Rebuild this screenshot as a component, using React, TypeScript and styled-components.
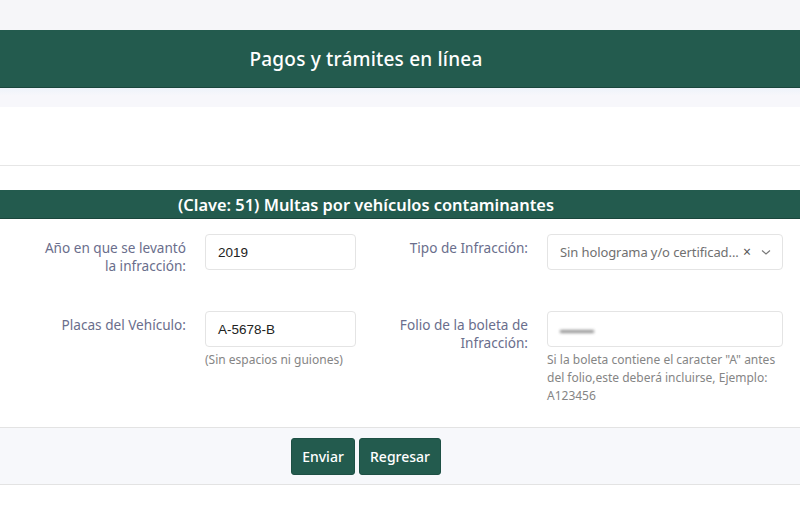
import React from 'react';
import styled, { createGlobalStyle } from 'styled-components';

const GlobalStyle = createGlobalStyle`
  html, body { margin: 0; padding: 0; background: #ffffff; }
  body { font-family: "Noto Sans", "Open Sans", sans-serif; }
  * { box-sizing: border-box; }
`;

const GREEN = '#235b4e';

const TopStrip = styled.div`
  height: 30px;
  background: #f6f6f9;
`;

const HeaderBar = styled.header`
  height: 58px;
  background: ${GREEN};
  border-bottom: 1px solid #1a463c;
  display: flex;
  align-items: center;
`;

const Centered = styled.div`
  width: 732px;
  text-align: center;
`;

const HeaderTitle = styled.h1`
  margin: 0;
  color: #ffffff;
  font-size: 19px;
  font-weight: 500;
  letter-spacing: 0.2px;
`;

const SubStrip = styled.div`
  height: 19px;
  background: linear-gradient(#eef3fa, #f7f7fb 40%);
`;

const Spacer = styled.div<{ h: number; line?: boolean }>`
  height: ${({ h }) => h}px;
  border-bottom: ${({ line }) => (line ? '1px solid #e6e6e6' : 'none')};
`;

const SectionBar = styled.div`
  height: 29px;
  background: ${GREEN};
  border-bottom: 1px solid #1a463c;
  display: flex;
  align-items: center;
`;

const SectionTitle = styled.h2`
  margin: 0;
  color: #ffffff;
  font-size: 16.4px;
  font-weight: 600;
`;

const Form = styled.form`
  padding: 15px 17px 22px 0;
  display: grid;
  grid-template-columns: 186px 151px 153px 236px;
  column-gap: 19px;
  row-gap: 36px;
  align-items: start;
`;

const Label = styled.label`
  text-align: right;
  color: #6a6e8c;
  font-size: 13.6px;
  line-height: 18px;
  padding-top: 5px;
`;

const FieldCol = styled.div`
  display: flex;
  flex-direction: column;
`;

const Input = styled.div<{ blurred?: boolean }>`
  height: 36px;
  border: 1px solid #e4e4e4;
  border-radius: 4px;
  display: flex;
  align-items: center;
  padding: 0 12px;
  font-family: "Liberation Sans", Arial, sans-serif;
  font-size: 13.5px;
  color: #222;
  span {
    filter: ${({ blurred }) => (blurred ? 'blur(1.4px)' : 'none')};
    color: ${({ blurred }) => (blurred ? '#909090' : '#222')};
    letter-spacing: ${({ blurred }) => (blurred ? '-2px' : '0')};
    font-size: ${({ blurred }) => (blurred ? '10px' : 'inherit')};
  }
`;

const Select = styled.div`
  height: 36px;
  border: 1px solid #e4e4e4;
  border-radius: 4px;
  display: flex;
  align-items: center;
  padding: 0 10px 0 12px;
  font-size: 13px;
  color: #707070;
  gap: 3px;
`;

const SelectValue = styled.span`
  flex: 1;
  white-space: nowrap;
  letter-spacing: -0.1px;
`;

const Clear = styled.span`
  color: #555;
  font-size: 14px;
  line-height: 1;
  margin-right: 6px;
`;

const Help = styled.div`
  margin-top: 4px;
  color: #858585;
  font-size: 12px;
  line-height: 18px;
`;

const Footer = styled.div`
  height: 58px;
  background: #f7f8fb;
  border-top: 1px solid #e3e3e3;
  border-bottom: 1px solid #e3e3e3;
  display: flex;
  align-items: center;
`;

const Buttons = styled.div`
  width: 732px;
  display: flex;
  justify-content: center;
  gap: 4px;
`;

const Button = styled.button<{ w: number }>`
  width: ${({ w }) => w}px;
  height: 37px;
  padding: 0;
  background: ${GREEN};
  color: #ffffff;
  border: 1px solid #1e5045;
  border-radius: 3px;
  font-family: "Noto Sans", sans-serif;
  font-size: 14px;
  font-weight: 500;
`;

const Chevron = () => (
  <svg width="12" height="12" viewBox="0 0 12 12" fill="none">
    <path d="M2 4.5 L6 8 L10 4.5" stroke="#777" strokeWidth="1.1" />
  </svg>
);

export default function App() {
  return (
    <>
      <GlobalStyle />
      <TopStrip />
      <HeaderBar>
        <Centered>
          <HeaderTitle>Pagos y trámites en línea</HeaderTitle>
        </Centered>
      </HeaderBar>
      <SubStrip />
      <Spacer h={59} line />
      <Spacer h={24} />
      <SectionBar>
        <Centered>
          <SectionTitle>(Clave: 51) Multas por vehículos contaminantes</SectionTitle>
        </Centered>
      </SectionBar>
      <Form onSubmit={(e) => e.preventDefault()}>
        <Label>Año en que se levantó<br />la infracción:</Label>
        <FieldCol>
          <Input><span>2019</span></Input>
        </FieldCol>
        <Label>Tipo de Infracción:</Label>
        <FieldCol>
          <Select>
            <SelectValue>Sin holograma y/o certificad...</SelectValue>
            <Clear>×</Clear>
            <Chevron />
          </Select>
        </FieldCol>

        <Label>Placas del Vehículo:</Label>
        <FieldCol>
          <Input><span>A-5678-B</span></Input>
          <Help>(Sin espacios ni guiones)</Help>
        </FieldCol>
        <Label>Folio de la boleta de<br />Infracción:</Label>
        <FieldCol>
          <Input blurred><span>▬▬▬▬</span></Input>
          <Help>Si la boleta contiene el caracter "A" antes del folio,este deberá incluirse, Ejemplo: A123456</Help>
        </FieldCol>
      </Form>
      <Footer>
        <Buttons>
          <Button w={64}>Enviar</Button>
          <Button w={82}>Regresar</Button>
        </Buttons>
      </Footer>
    </>
  );
}
